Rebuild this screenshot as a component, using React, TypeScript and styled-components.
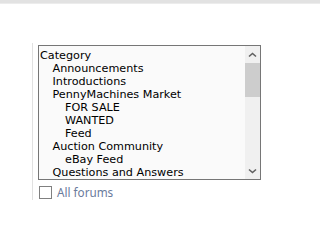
import styled, { createGlobalStyle } from "styled-components";

const GlobalStyle = createGlobalStyle`
    html, body {
        margin: 0;
        padding: 0;
        background: #fff;
    }
    body {
        font-family: "DejaVu Sans", Verdana, sans-serif;
        font-size: 11.2px;
    }
`;

const forums = [
    { label: "Category", level: 0 },
    { label: "Announcements", level: 1 },
    { label: "Introductions", level: 1 },
    { label: "PennyMachines Market", level: 1 },
    { label: "FOR SALE", level: 2 },
    { label: "WANTED", level: 2 },
    { label: "Feed", level: 2 },
    { label: "Auction Community", level: 1 },
    { label: "eBay Feed", level: 2 },
    { label: "Questions and Answers", level: 1 },
];

const Chevron = ({ down }: { down?: boolean }) => (
    <svg width="9" height="6" viewBox="0 0 9 6">
        <path
            d={down ? "M1 1.5 L4.5 4.5 L8 1.5" : "M1 4.5 L4.5 1.5 L8 4.5"}
            fill="none"
            stroke="#606060"
            strokeWidth="1.6"
        />
    </svg>
);

const App = () => {
    return (
        <>
            <GlobalStyle />
            <TopBar />
            <Main>
                <Panel>
                    <ListBox>
                        <Options>
                            {forums.map((f) => (
                                <Option key={f.label} $level={f.level}>
                                    {f.label}
                                </Option>
                            ))}
                        </Options>
                        <ScrollBar>
                            <Arrow>
                                <Chevron />
                            </Arrow>
                            <Thumb />
                            <Track />
                            <Arrow>
                                <Chevron down />
                            </Arrow>
                        </ScrollBar>
                    </ListBox>
                    <CheckRow>
                        <CheckBox />
                        <CheckLabel>All forums</CheckLabel>
                    </CheckRow>
                </Panel>
            </Main>
        </>
    );
};

const TopBar = styled.div`
    height: 3px;
    background: #e2e2e2;
    border-bottom: 1px solid #ececec;
`;

const Main = styled.div`
    padding: 39px 0 0 32px;
`;

const Panel = styled.div`
    width: 240px;
    height: 157px;
    padding: 2px 0 0 5px;
    border-left: 1px solid #e1e1e1;
    box-sizing: border-box;
`;

const ListBox = styled.div`
    display: flex;
    width: 223px;
    height: 135px;
    box-sizing: border-box;
    border: 1px solid #767676;
    background: #fafafa;
`;

const Options = styled.div`
    flex: 1;
    overflow: hidden;
    padding: 3px 0 0 1px;
`;

const Option = styled.div<{ $level: number }>`
    height: 13px;
    line-height: 13px;
    padding-left: ${(p) => p.$level * 12.5}px;
    color: #000;
    white-space: nowrap;
`;

const ScrollBar = styled.div`
    display: flex;
    flex-direction: column;
    width: 15px;
    background: #f0f0f0;
`;

const Arrow = styled.div`
    display: flex;
    align-items: center;
    justify-content: center;
    height: 17px;
`;

const Thumb = styled.div`
    height: 34px;
    background: #cdcdcd;
`;

const Track = styled.div`
    flex: 1;
`;

const CheckRow = styled.div`
    display: flex;
    align-items: center;
    gap: 5px;
    margin: 5px 0 0 1px;
`;

const CheckBox = styled.span`
    width: 13px;
    height: 13px;
    box-sizing: border-box;
    border: 1px solid #808080;
    background: #fff;
`;

const CheckLabel = styled.span`
    font-family: "Noto Sans", "Open Sans", sans-serif;
    font-size: 11.7px;
    line-height: 14px;
    color: #6a7b9c;
`;

export default App;
